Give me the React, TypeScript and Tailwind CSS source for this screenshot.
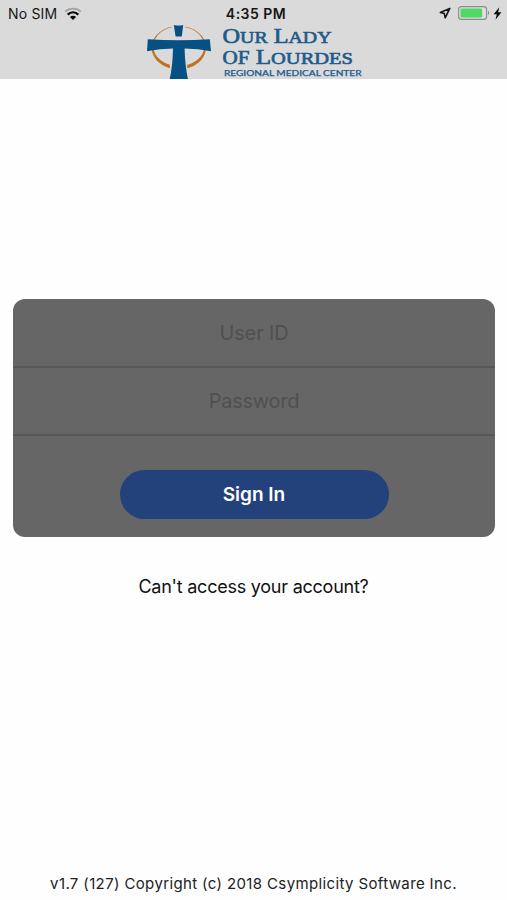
import React from "react";

function WifiIcon() {
  return (
    <svg width="18" height="14" viewBox="0 0 18 14" fill="none">
      <path d="M1.2 4.6 C5.6 0.6 12.4 0.6 16.8 4.6" stroke="#a3a3a3" strokeWidth="1.7" />
      <path d="M3.7 7.6 C6.8 4.6 11.2 4.6 14.3 7.6" stroke="#080808" strokeWidth="2.4" />
      <path d="M5.9 10 C7.7 8.2 10.3 8.2 12.1 10 L9 12.9 Z" fill="#080808" />
    </svg>
  );
}

function LocationIcon() {
  return (
    <svg width="12" height="12" viewBox="0 0 12 12" fill="none">
      <path d="M10.8 1.4 L1.3 5.5 L5.3 6.6 L6.2 10.8 Z" stroke="#151515" strokeWidth="1.6" strokeLinejoin="round" />
    </svg>
  );
}

function BatteryIcon() {
  return (
    <svg width="33" height="14" viewBox="0 0 33 14">
      <rect x="0.6" y="0.6" width="28" height="12.8" rx="3" fill="#dedede" stroke="#8c8c8c" strokeWidth="1.1" />
      <rect x="2.5" y="2.4" width="21.6" height="9.2" rx="1" fill="#4fd964" />
      <path d="M30 4.8 Q32.4 7 30 9.2 Z" fill="#8c8c8c" />
    </svg>
  );
}

function BoltIcon() {
  return (
    <svg width="9" height="13" viewBox="0 0 9 13">
      <path d="M6.3 0.3 L0.6 7.2 H3.8 L2.5 12.7 L8.4 5.3 H5.1 Z" fill="#0a0a0a" />
    </svg>
  );
}

function Logo() {
  return (
    <svg width="216" height="55" viewBox="147 24 216 55" className="block">
      <path
        fillRule="evenodd"
        fill="#bd7421"
        d="M151.6 47.5 A27.2 21.6 0 1 1 206 47.5 A27.2 22 0 1 1 151.6 47.5 Z M153.3 46.6 A25.5 19.4 0 1 0 204.3 46.6 A25.5 20.2 0 1 0 153.3 46.6 Z"
      />
      <path d="M171.6 24 H185.2 V37.5 H171.6 Z" fill="#dadada" />
      <path d="M170 51 H187.2 V79 H170 Z" fill="#dadada" />
      <path d="M173.8 25.1 Q178.5 26.1 183.2 25.1 L181.8 36.6 H175.6 Z" fill="#075084" />
      <path
        d="M147.8 39.2 Q178.8 41.2 209.8 39.2 L211 51.2 Q198 48.7 184.6 48.4 Q185 65 187.9 79 H169.7 Q172.8 65 173 48.4 Q160 48.7 147 51.2 Z"
        fill="#075084"
      />
      <g fill="#1f5a8c" stroke="#1f5a8c" fontFamily="'Liberation Serif', serif" strokeWidth="0.65">
        <text x="222.5" y="42.8" fontSize="21.5" textLength="109" lengthAdjust="spacingAndGlyphs">
          O<tspan fontSize="17.5">UR</tspan> L<tspan fontSize="17.5">ADY</tspan>
        </text>
        <text x="222.5" y="64.2" fontSize="21.5" textLength="130.5" lengthAdjust="spacingAndGlyphs">
          <tspan fontSize="18">OF</tspan> L<tspan fontSize="17.5">OURDES</tspan>
        </text>
      </g>
      <text
        x="224"
        y="75.6"
        fontSize="7.8"
        fontWeight="500"
        fontFamily="Lato, sans-serif"
        fill="#26608f"
        stroke="#26608f"
        strokeWidth="0.25"
        textLength="137.5"
        lengthAdjust="spacingAndGlyphs"
      >
        REGIONAL MEDICAL CENTER
      </text>
    </svg>
  );
}

function StatusBar() {
  return (
    <div className="grid h-6 grid-cols-3 items-start pt-[6px] text-[14px] leading-4 text-[#171717]">
      <div className="flex items-center gap-[7px] pl-[8px]">
        <span className="tracking-[0.18px]">No SIM</span>
        <WifiIcon />
      </div>
      <div className="pl-[5px] text-center font-semibold tracking-[0.48px]">4:35 PM</div>
      <div className="flex items-center justify-end pr-[5px]">
        <LocationIcon />
        <span className="w-[7px]" />
        <BatteryIcon />
        <span className="w-[2px]" />
        <BoltIcon />
      </div>
    </div>
  );
}

export default function App() {
  return (
    <div className="flex h-[900px] w-[507px] flex-col bg-[#fefefe] font-['Inter',sans-serif]">
      <header className="h-[79px] bg-[#dadada]">
        <StatusBar />
        <div className="pl-[147px]">
          <Logo />
        </div>
      </header>
      <form
        className="ml-[13px] mr-[12px] mt-[220px] flex h-[238px] flex-col overflow-hidden rounded-[12px] bg-[#666666]"
        onSubmit={(e) => e.preventDefault()}
      >
        <div className="flex h-[69px] items-center justify-center border-b-2 border-[#575757] text-[20px] tracking-[-0.15px] text-[#505050]">
          User ID
        </div>
        <div className="flex h-[68px] items-center justify-center border-b-2 border-[#575757] text-[20px] tracking-[-0.25px] text-[#505050]">
          Password
        </div>
        <button className="mx-auto mt-[34px] h-[49px] w-[269px] rounded-full bg-[#23427c] pt-[2px] text-[19px] font-semibold text-white">
          Sign In
        </button>
      </form>
      <a className="mt-[36px] text-center text-[18px] leading-7 tracking-[-0.24px] text-[#111111]">
        Can't access your account?
      </a>
      <footer className="mt-auto pb-[4px] text-center text-[15px] leading-6 tracking-[0.37px] text-[#222222]">
        v1.7 (127) Copyright (c) 2018 Csymplicity Software Inc.
      </footer>
    </div>
  );
}
